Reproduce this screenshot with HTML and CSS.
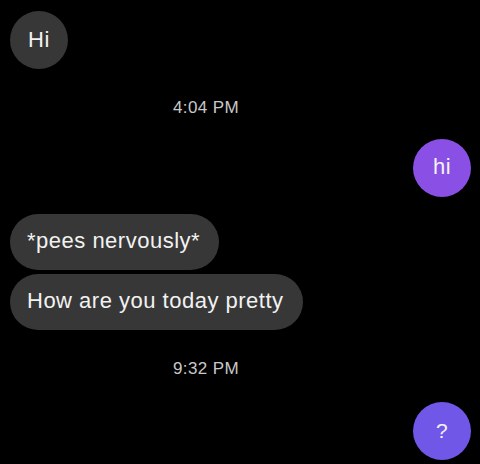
FILE: index.html
```html
<!DOCTYPE html>
<html lang="en">
<head>
<meta charset="utf-8">
<title>Chat</title>
<link rel="stylesheet" href="styles.css">
</head>
<body>
<div class="chat">
  <div class="msg in round first">Hi</div>
  <div class="stamp stamp-1">4:04 PM</div>
  <div class="msg out round hi">hi</div>
  <div class="group">
    <div class="msg in pill">*pees nervously*</div>
    <div class="msg in pill">How are you today pretty</div>
  </div>
  <div class="stamp stamp-2">9:32 PM</div>
  <div class="msg out round q">?</div>
</div>
</body>
</html>
```
FILE: styles.css
```css
html, body {
  margin: 0;
  padding: 0;
  background: #000;
}
body {
  width: 480px;
  height: 464px;
  overflow: hidden;
  font-family: "Liberation Sans", Arial, sans-serif;
  color: #fff;
}
.chat {
  display: flex;
  flex-direction: column;
  align-items: flex-start;
}
.msg {
  box-sizing: border-box;
  color: #f2f2f2;
  font-size: 22px;
  letter-spacing: 0.5px;
}
.in {
  background: #373737;
  align-self: flex-start;
  margin-left: 10px;
}
.out {
  align-self: flex-end;
  margin-right: 9px;
}
.round {
  width: 58px;
  height: 58px;
  border-radius: 50%;
  display: flex;
  align-items: center;
  justify-content: center;
  font-size: 22px;
  padding-bottom: 1px;
}
.first {
  margin-top: 11px;
}
.hi {
  background: #8a50e6;
  margin-top: 21px;
  padding-bottom: 3px;
}
.q {
  background: #7157e8;
  margin-top: 23px;
  font-size: 21px;
}
.group {
  display: flex;
  flex-direction: column;
  align-items: flex-start;
  gap: 4px;
  margin-top: 17px;
}
.pill {
  height: 56px;
  border-radius: 28px;
  padding: 0 19px 0 17px;
  display: flex;
  align-items: center;
  padding-bottom: 2px;
}
.stamp {
  align-self: stretch;
  text-align: center;
  padding-right: 68px;
  font-size: 17px;
  line-height: 20px;
  color: #c8c8c8;
  letter-spacing: 0.4px;
}
.stamp-1 {
  margin-top: 29px;
}
.stamp-2 {
  margin-top: 29px;
}
```
